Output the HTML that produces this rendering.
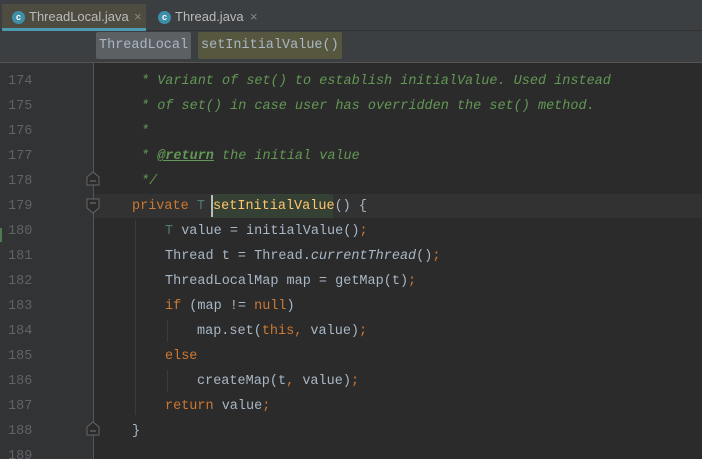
<!DOCTYPE html>
<html><head><style>
*{margin:0;padding:0;box-sizing:border-box}
html,body{width:702px;height:459px;overflow:hidden}
body{background:#2b2b2b;position:relative;font-family:"Liberation Mono",monospace}
.tabs{position:absolute;left:0;top:0;width:702px;height:31px;background:#3c3f41;border-bottom:1px solid #323232}
.tab{position:absolute;top:4px;height:26px;font:13px "Liberation Sans",sans-serif;color:#bbb;line-height:26px}
.ic{position:absolute;top:7px;width:13px;height:13px;border-radius:50%;background:#3e8fa8;color:#fff;font:bold 9px "Liberation Sans";text-align:center;line-height:13px}
.bc{position:absolute;left:0;top:31px;width:702px;height:32px;background:#3c3f41;border-bottom:1px solid #555}
.crumb{position:absolute;top:1px;height:27px;line-height:27px;font-size:13.5px;padding:0 3px;border-radius:2px}
.gut{position:absolute;left:0;top:63px;width:93px;height:396px;background:#313335}
.ln{position:absolute;left:8px;font-size:13.5px;color:#606366;height:25px;line-height:25px}
.code{position:absolute;left:0;font-size:13.5px;color:#a9b7c6;white-space:pre;height:25px;line-height:25px}
.c{color:#629755;font-style:italic}
.k{color:#cc7832}.t{color:#507874}.i{font-style:italic}
.g{position:absolute;width:1px;background:#3b3b3b}
</style></head><body>
<div class="tabs">
<div class="tab" style="left:2px;width:144px;background:#4e4b40;border-bottom:3px solid #4a9bb2;height:27px"><span class="ic" style="left:10px">c</span><span style="position:absolute;left:27px">ThreadLocal.java</span><span style="position:absolute;left:132px;color:#888">×</span></div>
<div class="tab" style="left:150px;width:114px;background:#3c3f41"><span class="ic" style="left:8px">c</span><span style="position:absolute;left:25px">Thread.java</span><span style="position:absolute;left:100px;color:#888">×</span></div>
</div>
<div class="bc">
<div class="crumb" style="left:96px;background:#5d6063;color:#a9b7c6">ThreadLocal</div>
<div class="crumb" style="left:198px;background:#57573f;color:#a9b7c6">setInitialValue()</div>
</div>
<div class="gut"></div>
<div style="position:absolute;left:93px;top:63px;width:1px;height:396px;background:#555"></div>
<div style="position:absolute;left:94px;top:194px;width:608px;height:24px;background:#323232"></div>
<div style="position:absolute;left:213px;top:194px;width:120px;height:24px;background:#344134"></div>
<div style="position:absolute;left:211px;top:195px;width:2px;height:22px;background:#bbb"></div>

<div class="ln" style="top:69px">174</div><div class="ln" style="top:94px">175</div><div class="ln" style="top:119px">176</div><div class="ln" style="top:144px">177</div><div class="ln" style="top:169px">178</div><div class="ln" style="top:194px">179</div><div class="ln" style="top:219px">180</div><div class="ln" style="top:244px">181</div><div class="ln" style="top:269px">182</div><div class="ln" style="top:294px">183</div><div class="ln" style="top:319px">184</div><div class="ln" style="top:344px">185</div><div class="ln" style="top:369px">186</div><div class="ln" style="top:394px">187</div><div class="ln" style="top:419px">188</div><div class="ln" style="top:444px">189</div>
<div style="position:absolute;left:0;top:228px;width:2px;height:14px;background:#4f7a4f"></div>
<svg style="position:absolute;left:86px;top:170px" width="16" height="50"><path d="M1 7 L7 2 L13 7 V15 H1 Z" fill="#2b2b2b" stroke="#666"/><line x1="4" y1="11" x2="10" y2="11" stroke="#777"/><path d="M1 29 H13 V38 L7 43 L1 38 Z" fill="#2b2b2b" stroke="#666"/><line x1="4" y1="33" x2="10" y2="33" stroke="#777"/></svg>
<svg style="position:absolute;left:86px;top:420px" width="16" height="20"><path d="M1 7 L7 2 L13 7 V15 H1 Z" fill="#2b2b2b" stroke="#666"/><line x1="4" y1="11" x2="10" y2="11" stroke="#777"/></svg>
<div class="g" style="left:135px;top:220px;height:195px"></div>
<div class="g" style="left:167px;top:320px;height:22px"></div>
<div class="g" style="left:167px;top:370px;height:22px"></div>

<div class="code c" style="top:69px;left:141px">* Variant of set() to establish initialValue. Used instead</div>
<div class="code c" style="top:94px;left:141px">* of set() in case user has overridden the set() method.</div>
<div class="code c" style="top:119px;left:141px">*</div>
<div class="code c" style="top:144px;left:141px">* <b style="text-decoration:underline">@return</b> the initial value</div>
<div class="code c" style="top:169px;left:141px">*/</div>
<div class="code" style="top:194px;left:132px"><span class="k">private</span> <span class="t">T</span> <span style="color:#ffc66d">setInitialValue</span>() {</div>
<div class="code" style="top:219px;left:165px"><span class="t">T</span> value = initialValue()<span class="k">;</span></div>
<div class="code" style="top:244px;left:165px">Thread t = Thread.<span class="i">currentThread</span>()<span class="k">;</span></div>
<div class="code" style="top:269px;left:165px">ThreadLocalMap map = getMap(t)<span class="k">;</span></div>
<div class="code" style="top:294px;left:165px"><span class="k">if</span> (map != <span class="k">null</span>)</div>
<div class="code" style="top:319px;left:197px">map.set(<span class="k">this,</span> value)<span class="k">;</span></div>
<div class="code" style="top:344px;left:165px"><span class="k">else</span></div>
<div class="code" style="top:369px;left:197px">createMap(t<span class="k">,</span> value)<span class="k">;</span></div>
<div class="code" style="top:394px;left:165px"><span class="k">return</span> value<span class="k">;</span></div>
<div class="code" style="top:419px;left:132px">}</div>
</body></html>
